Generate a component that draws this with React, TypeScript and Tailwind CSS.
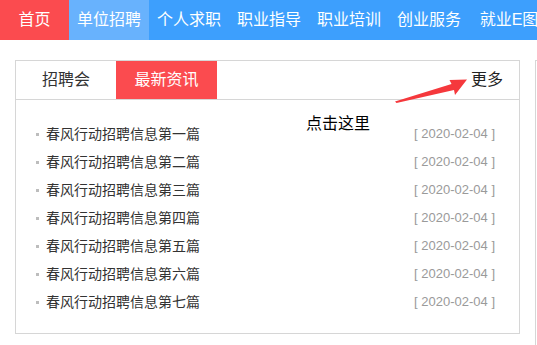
const navItems = ['单位招聘', '个人求职', '职业指导', '职业培训', '创业服务', '就业E图'];

const news = ['第一篇', '第二篇', '第三篇', '第四篇', '第五篇', '第六篇', '第七篇'];

const font = { fontFamily: '"Liberation Sans", "Noto Sans CJK SC", sans-serif' };

export default function App() {
  return (
    <div className="w-[537px] h-[345px] overflow-hidden bg-white relative" style={font}>
      {/* top nav */}
      <div className="flex h-10 bg-[#3d9ffd] text-white text-[16px] leading-10 whitespace-nowrap">
        <div className="w-[69px] shrink-0 text-center bg-[#fb4b4f]">首页</div>
        {navItems.map((item, i) => (
          <div
            key={item}
            className={`w-20 shrink-0 text-center ${i === 0 ? 'bg-[#68b2fd]' : ''}`}
          >
            {item}
          </div>
        ))}
      </div>

      <div className="flex gap-[15px] px-[15px] pt-5">
        {/* news panel */}
        <div className="w-[505px] h-[274px] shrink-0 border border-[#d6d6d6]">
          <div className="flex items-center h-[39px] border-b border-[#d6d6d6] text-[16px]">
            <div className="w-[100px] h-[38px] leading-[38px] text-center text-[#333]">招聘会</div>
            <div className="w-[101px] h-[38px] leading-[38px] text-center text-white bg-[#fb4b4f]">最新资讯</div>
            <div className="ml-auto pr-4 text-[#222]">更多</div>
          </div>
          <ul className="pt-5 pl-5 pr-6">
            {news.map(n => (
              <li key={n} className="flex items-center h-7">
                <span className="w-[3px] h-[3px] bg-[#bdbdbd] mr-[7px]" />
                <span className="text-[14px] text-[#333]">春风行动招聘信息{n}</span>
                <span className="ml-auto text-[13px] text-[#9a9a9a]">[ 2020-02-04 ]</span>
              </li>
            ))}
          </ul>
        </div>
        {/* next panel, cut off at the edge */}
        <div className="w-[300px] h-[300px] shrink-0 border border-[#d6d6d6]" />
      </div>

      {/* annotation */}
      <svg className="absolute left-0 top-0 pointer-events-none" width="537" height="345">
        <polygon
          points="395,101.5 451.5,84 449.5,80 467,79.5 455,95 454,90 396.5,103"
          fill="#f5383c"
        />
      </svg>
      <div className="absolute left-[306px] top-[112px] text-[16px] leading-6 text-black">点击这里</div>
    </div>
  );
}
